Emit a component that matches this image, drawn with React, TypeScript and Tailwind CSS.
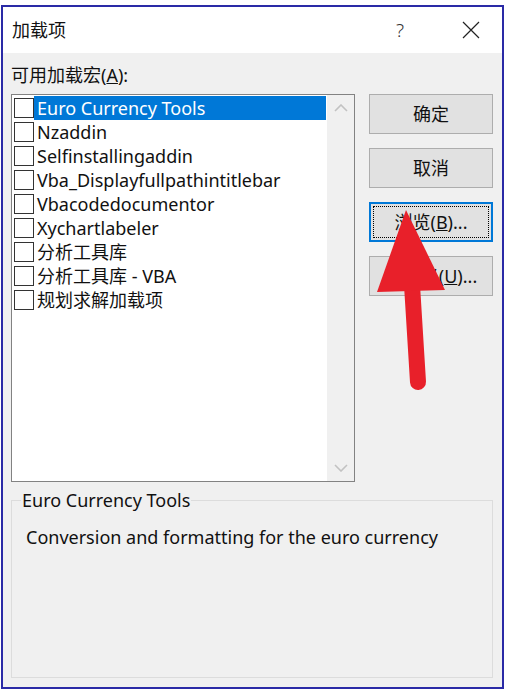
const items = [
  "Euro Currency Tools",
  "Nzaddin",
  "Selfinstallingaddin",
  "Vba_Displayfullpathintitlebar",
  "Vbacodedocumentor",
  "Xychartlabeler",
  "分析工具库",
  "分析工具库 - VBA",
  "规划求解加载项",
];

const font = { fontFamily: '"Noto Sans", "Noto Sans CJK SC", sans-serif' };

function Button({ children, focused }: { children: React.ReactNode; focused?: boolean }) {
  return (
    <div
      className={
        "h-[40px] w-[124px] flex items-center justify-center bg-[#e1e1e1] text-[18px] text-[#111] " +
        (focused ? "border-2 border-[#0078d7] p-[2px]" : "border border-[#adadad]")
      }
    >
      {focused ? (
        <div className="w-full h-full border border-dotted border-black flex items-center justify-center">
          {children}
        </div>
      ) : (
        children
      )}
    </div>
  );
}

export default function App() {
  return (
    <div className="w-[515px] h-[693px] bg-white pt-[5px] pl-[1px] relative" style={font}>
      <div className="w-[503px] h-[684px] border-2 border-[#2a2aa6] flex flex-col bg-[#f0f0f0]">
        <div className="h-[46px] bg-white flex items-center pl-[9px] text-[18px] text-[#111]">
          <span className="flex-1">加载项</span>
          <span className="w-[70px] text-center text-[#333] font-light text-[19px]">?</span>
          <svg width="18" height="18" viewBox="0 0 18 18" className="mr-[22px] ml-[27px]">
            <path d="M1 1L17 17M17 1L1 17" stroke="#222" strokeWidth="1.2" />
          </svg>
        </div>
        <div className="pl-[8px] pt-[11px] text-[18px] text-[#111] leading-[22px]">
          可用加载宏(<span className="underline">A</span>):
        </div>
        <div className="flex mt-[8px] pl-[8px]">
          <div className="w-[344px] h-[388px] border border-[#828282] bg-white flex">
            <div className="flex-1 pt-[1px] pl-[2px]">
              {items.map((t, i) => (
                <div key={t} className="h-[24px] flex items-center">
                  <div className="w-[20px] h-[20px] border border-[#333] bg-white shrink-0" />
                  <div
                    className={
                      "h-[24px] flex-1 flex items-center pl-[3px] text-[18px] leading-none " +
                      (i === 0 ? "bg-[#0078d7] text-white" : "text-[#111]")
                    }
                  >
                    {t}
                  </div>
                </div>
              ))}
            </div>
            <div className="w-[27px] ml-[1px] bg-[#f0f0f0] flex flex-col items-center justify-between py-[9px]">
              <svg width="14" height="8" viewBox="0 0 14 8">
                <path d="M1 7L7 1L13 7" stroke="#c2c2c2" strokeWidth="1.6" fill="none" />
              </svg>
              <svg width="14" height="8" viewBox="0 0 14 8">
                <path d="M1 1L7 7L13 1" stroke="#c2c2c2" strokeWidth="1.6" fill="none" />
              </svg>
            </div>
          </div>
          <div className="ml-[14px] flex flex-col gap-[14px]">
            <Button>确定</Button>
            <Button>取消</Button>
            <Button focused>
              浏览(<span className="underline">B</span>)...
            </Button>
            <Button>
              自定义(<span className="underline">U</span>)...
            </Button>
          </div>
        </div>
        <div className="mt-[18px] ml-[8px] w-[482px] h-[178px] border border-[#dcdcdc] relative">
          <div className="absolute left-[9px] top-[-13px] bg-[#f0f0f0] px-[1px] text-[18px] leading-[24px] text-[#111]">
            Euro Currency Tools
          </div>
          <div className="pl-[14px] pt-[23px] text-[18px] text-[#111]">
            Conversion and formatting for the euro currency
          </div>
        </div>
      </div>
      <svg className="absolute left-0 top-0 pointer-events-none" width="515" height="693">
        <path d="M412 285 L418 382" stroke="#e8202a" strokeWidth="16" strokeLinecap="round" />
        <path d="M406 210 L445 290 L377 292 Z" fill="#e8202a" />
      </svg>
    </div>
  );
}
